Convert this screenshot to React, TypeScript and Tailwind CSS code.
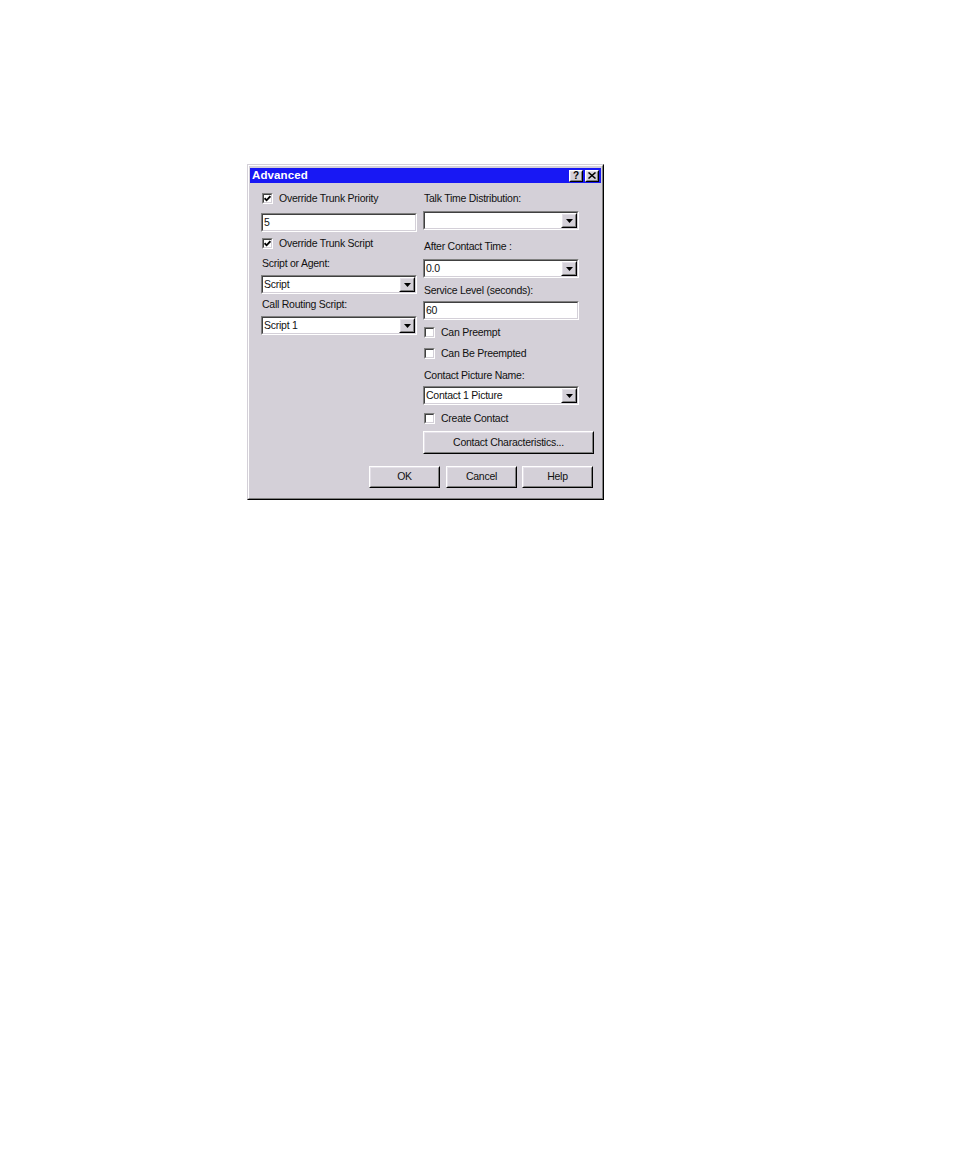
import React from "react";

const BG = "bg-[#d4d0d8]";

function Sunken({ className, children }: { className?: string; children?: React.ReactNode }) {
  return (
    <div className={"border border-t-[#808080] border-l-[#808080] border-b-white border-r-white " + (className ?? "")}>
      <div className="h-full border border-t-[#404040] border-l-[#404040] border-b-[#d4d0d8] border-r-[#d4d0d8] bg-white">
        {children}
      </div>
    </div>
  );
}

function Raised({ className, children }: { className?: string; children?: React.ReactNode }) {
  return (
    <div className={"border border-t-white border-l-white border-b-black border-r-black " + BG + " " + (className ?? "")}>
      <div className="flex h-full items-center justify-center border border-t-[#e4e0e8] border-l-[#e4e0e8] border-b-[#808080] border-r-[#808080]">
        {children}
      </div>
    </div>
  );
}

function Checkbox({ label, checked }: { label: string; checked?: boolean }) {
  return (
    <div className="flex h-[13px] items-center">
      <Sunken className="ml-[1px] h-[11px] w-[11px]">
        <div className="flex h-full w-full items-center justify-center">
          {checked && (
            <svg width="7" height="7" viewBox="0 0 7 7">
              <path d="M0.6 3.2 L2.6 5.3 L6.4 1.2" fill="none" stroke="black" strokeWidth="1.8" />
            </svg>
          )}
        </div>
      </Sunken>
      <span className="ml-[6px] whitespace-nowrap">{label}</span>
    </div>
  );
}

function Label({ text }: { text: string }) {
  return <div className="flex h-[13px] items-center whitespace-nowrap pl-[1px]">{text}</div>;
}

function TextField({ value }: { value: string }) {
  return (
    <Sunken className="h-[19px] w-[156px]">
      <div className="flex h-full items-center pl-[1px]">{value}</div>
    </Sunken>
  );
}

function Select({ value }: { value: string }) {
  return (
    <Sunken className="h-[19px] w-[156px]">
      <div className="flex h-full items-center">
        <div className="flex-1 pl-[1px] whitespace-nowrap">{value}</div>
        <Raised className="h-full w-[16px]">
          <svg width="7" height="4" viewBox="0 0 7 4">
            <polygon points="0,0 7,0 3.5,4" fill="black" />
          </svg>
        </Raised>
      </div>
    </Sunken>
  );
}

export default function App() {
  return (
    <div className="min-h-[1162px] w-[954px] bg-white pl-[247px] pt-[164px] font-['Liberation_Sans',Arial,sans-serif] text-[10.5px] tracking-[-0.25px] text-[#111]">
      <div className="h-[336px] w-[357px] border border-t-[#d4d0d8] border-l-[#d4d0d8] border-b-black border-r-black">
        <div className={"flex h-full flex-col border border-t-white border-l-white border-b-[#808080] border-r-[#808080] px-[1px] pt-[2px] " + BG}>
          {/* Title bar */}
          <div className="flex h-[15px] items-center bg-[#1818f4] pl-[2px] pr-[2px]">
            <span className="flex-1 text-[11.5px] font-bold tracking-[0.1px] text-white">Advanced</span>
            <div className="flex gap-[2px]">
              <Raised className="h-[12px] w-[14px]">
                <span className="text-[10px] font-bold leading-none tracking-normal text-black">?</span>
              </Raised>
              <Raised className="h-[12px] w-[14px]">
                <svg width="8" height="7" viewBox="0 0 8 7">
                  <path d="M0.5 0.5 L7.5 6.5 M7.5 0.5 L0.5 6.5" stroke="black" strokeWidth="1.5" />
                </svg>
              </Raised>
            </div>
          </div>

          {/* Body */}
          <div className="flex gap-[6px] pl-[11px]">
            <div className="flex w-[156px] flex-col">
              <div className="mt-[9px]">
                <Checkbox label="Override Trunk Priority" checked />
              </div>
              <div className="mt-[8px]">
                <TextField value="5" />
              </div>
              <div className="mt-[5px]">
                <Checkbox label="Override Trunk Script" checked />
              </div>
              <div className="mt-[7px]">
                <Label text="Script or Agent:" />
              </div>
              <div className="mt-[5px]">
                <Select value="Script" />
              </div>
              <div className="mt-[4px]">
                <Label text="Call Routing Script:" />
              </div>
              <div className="mt-[5px]">
                <Select value="Script 1" />
              </div>
            </div>

            <div className="flex w-[171px] flex-col">
              <div className="mt-[9px]">
                <Label text="Talk Time Distribution:" />
              </div>
              <div className="mt-[6px]">
                <Select value="" />
              </div>
              <div className="mt-[10px]">
                <Label text="After Contact Time :" />
              </div>
              <div className="mt-[6px]">
                <Select value="0.0" />
              </div>
              <div className="mt-[6px]">
                <Label text="Service Level (seconds):" />
              </div>
              <div className="mt-[4px]">
                <TextField value="60" />
              </div>
              <div className="mt-[6px]">
                <Checkbox label="Can Preempt" />
              </div>
              <div className="mt-[8px]">
                <Checkbox label="Can Be Preempted" />
              </div>
              <div className="mt-[9px]">
                <Label text="Contact Picture Name:" />
              </div>
              <div className="mt-[4px]">
                <Select value="Contact 1 Picture" />
              </div>
              <div className="mt-[7px]">
                <Checkbox label="Create Contact" />
              </div>
              <div className="mt-[6px]">
                <Raised className="h-[23px] w-[171px]">
                  <span>Contact Characteristics...</span>
                </Raised>
              </div>
            </div>
          </div>

          {/* Buttons */}
          <div className="mt-[12px] flex justify-end pr-[8px]">
            <Raised className="h-[22px] w-[71px]">
              <span>OK</span>
            </Raised>
            <Raised className="ml-[6px] h-[22px] w-[71px]">
              <span>Cancel</span>
            </Raised>
            <Raised className="ml-[5px] h-[22px] w-[71px]">
              <span>Help</span>
            </Raised>
          </div>
        </div>
      </div>
    </div>
  );
}
